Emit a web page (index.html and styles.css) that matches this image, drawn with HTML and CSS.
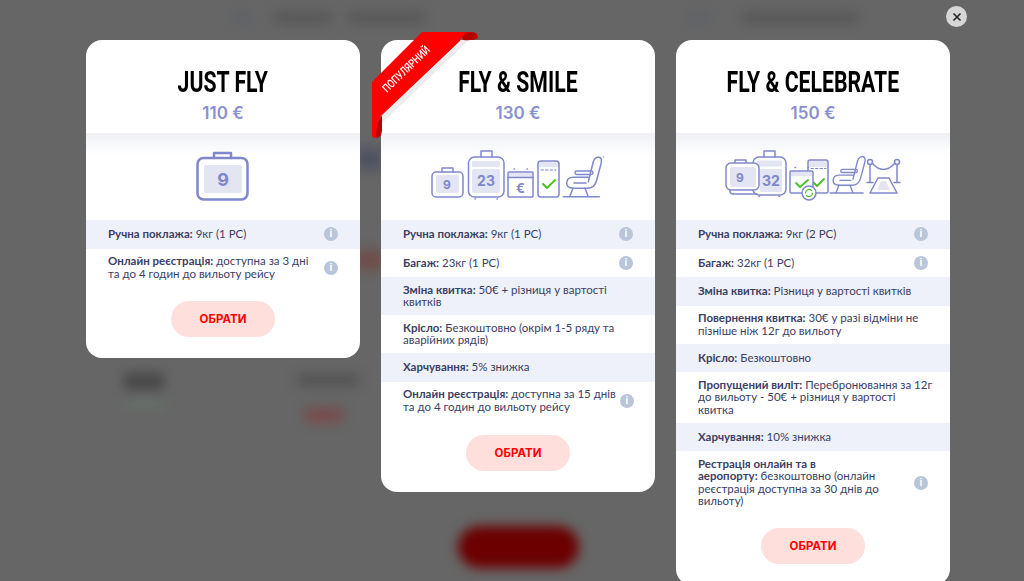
FILE: index.html
```html
<!DOCTYPE html>
<html lang="uk">
<head>
<meta charset="utf-8">
<meta name="viewport" content="width=device-width, initial-scale=1">
<title>Тарифи</title>
<link rel="stylesheet" href="styles.css">
</head>
<body>
<!-- blurred page behind the modal -->
<div class="behind">
  <span class="blot b1"></span><span class="blot b2"></span><span class="blot b3"></span>
  <span class="blot b4"></span><span class="blot b5"></span>
  <span class="blot b6"></span><span class="blot b7"></span>
  <span class="blot b8"></span><span class="blot b9"></span>
  <span class="blot b10"></span>
  <span class="blot b11"></span><span class="blot b12"></span>
</div>

<div class="modal">
  <button class="close" aria-label="Закрити">
    <svg viewBox="0 0 10 10" width="10" height="10"><path d="M1.500 1.500l7 7M8.500 1.500l-7 7" stroke="#222" stroke-width="1.600" fill="none"/></svg>
  </button>

  <div class="plans">
    <section class="plan">
      <header class="plan-head">
        <h2 class="plan-name"><span>JUST FLY</span></h2>
        <p class="plan-price">110 €</p>
      </header>
      <div class="plan-pic">
        <svg class="ico" width="54" height="52" viewBox="0 0 54 52">
          <path class="heavy" d="M18 8V3h17v5"/>
          <rect class="heavy" x="1.500" y="8" width="50" height="41.500" rx="6"/>
          <rect class="soft" x="8" y="15" width="38" height="28" rx="2"/>
          <text x="27" y="35.500" class="num" font-size="18">9</text>
        </svg>
      </div>
      <ul class="rows">
        <li class="row"><p><b>Ручна поклажа:</b> 9кг (1 PC)</p><i class="info">i</i></li>
        <li class="row"><p><b>Онлайн реєстрація:</b> доступна за 3 дні<br>та до 4 годин до вильоту рейсу</p><i class="info">i</i></li>
      </ul>
      <a class="pick" href="#">ОБРАТИ</a>
    </section>

    <section class="plan">
      <svg class="ribbon" width="110" height="110" viewBox="0 0 110 110">
        <path class="crease" d="M91 8h6L10 91v-8z"/>
        <path class="fold" d="M88 0h12q6 0 6 6-5 3-15 2z"/>
        <path class="fold" d="M0 100l10-17v16q-1 7-6 7-4 0-4-4z"/>
        <path class="band" d="M0 50L50 0h46q-5 1-8 9L10 83q-6 5-6 23-4 0-4-4z"/>
        <text transform="translate(15 61) rotate(-44) scale(.78 1)" class="ribbon-text">ПОПУЛЯРНИЙ</text>
      </svg>
      <header class="plan-head">
        <h2 class="plan-name"><span>FLY &amp; SMILE</span></h2>
        <p class="plan-price">130 €</p>
      </header>
      <div class="plan-pic">
        <svg class="ico" width="174" height="52" viewBox="0 0 174 52">
          <path d="M11 22v-4h11v4"/>
          <rect x="1" y="22" width="31" height="25" rx="4"/>
          <rect class="soft" x="5" y="25" width="23" height="18" rx="2"/>
          <text x="16" y="39" class="num" font-size="12">9</text>

          <path d="M50 7V1h11v6"/>
          <rect x="37.500" y="7" width="35.500" height="40" rx="6"/>
          <rect class="soft" x="41" y="11" width="28" height="6" rx="1"/>
          <rect class="soft" x="41" y="19" width="28" height="24" rx="2"/>
          <text x="55" y="36" class="num" font-size="14">23</text>
          <path d="M44 49h.5M66 49h.5"/>

          <path d="M83 19h.5M96 19h.5"/>
          <rect class="soft" x="78" y="23" width="23" height="4"/>
          <rect x="77" y="22" width="25" height="25" rx="1"/>
          <path d="M77 27.500h25"/>
          <text x="89.500" y="42.500" class="num" font-size="13">€</text>

          <path class="soft" d="M108 14q0-2 2-2h16q2 0 2 2v3h-20z"/>
          <rect x="107" y="11" width="21" height="36" rx="3"/>
          <path d="M110 20h15" stroke-dasharray="2.500 2" stroke-width="1"/>
          <path class="tick" d="M112 34l4 4 8-8"/>

          <path d="M157.300 31.700l5-20q1.700-5 6-4.400 3.400 1 1.400 7.700l-4 15q-1.700 8.300-10 8.300h-13.400q-6.600-.6-6.600-5 0-6 6.600-6h15"/>
          <rect x="144" y="21" width="18" height="3.500" rx="1.700"/>
          <path d="M143 33h12M142 38.300L139 46M154 38.300l3 7.700M132.300 46.700h36"/>
          <path d="M172.500 7h.2" stroke-width="1"/>
        </svg>
      </div>
      <ul class="rows">
        <li class="row"><p><b>Ручна поклажа:</b> 9кг (1 PC)</p><i class="info">i</i></li>
        <li class="row"><p><b>Багаж:</b> 23кг (1 PC)</p><i class="info">i</i></li>
        <li class="row"><p><b>Зміна квитка:</b> 50€ + різниця у вартості<br>квитків</p></li>
        <li class="row"><p><b>Крісло:</b> Безкоштовно (окрім 1-5 ряду та<br>аварійних рядів)</p></li>
        <li class="row"><p><b>Харчування:</b> 5% знижка</p></li>
        <li class="row"><p><b>Онлайн реєстрація:</b> доступна за 15 днів<br>та до 4 годин до вильоту рейсу</p><i class="info">i</i></li>
      </ul>
      <a class="pick" href="#">ОБРАТИ</a>
    </section>

    <section class="plan">
      <header class="plan-head">
        <h2 class="plan-name"><span>FLY &amp; CELEBRATE</span></h2>
        <p class="plan-price">150 €</p>
      </header>
      <div class="plan-pic">
        <svg class="ico" width="178" height="52" viewBox="0 0 178 52">
          <path d="M40 7V1h11v6"/>
          <rect x="29" y="7" width="33" height="38" rx="6"/>
          <rect class="soft" x="33" y="10.500" width="25" height="6" rx="1"/>
          <rect class="soft" x="36" y="19" width="22" height="23" rx="1"/>
          <text x="47" y="36" class="num" font-size="14">32</text>
          <path d="M35 46.500h.5M55 46.500h.5"/>

          <path d="M11 13v-3h11v3"/>
          <path d="M6 40v1q0 3 3 3h24"/>
          <rect class="wash" x="2" y="13" width="33" height="27" rx="5"/>
          <rect class="soft" x="6" y="17" width="26" height="20" rx="2"/>
          <text x="16" y="32" class="num" font-size="12">9</text>

          <rect class="wash" x="84" y="10" width="20" height="33" rx="2"/>
          <path class="soft" d="M85 11h18v6H85z"/>
          <path d="M87 18.500h15" stroke-dasharray="2.500 2" stroke-width="1"/>
          <path class="tick" d="M89 32l4 4 7-7"/>

          <path d="M71 17.500h.5M84 17.500h.5"/>
          <rect class="wash" x="66" y="21" width="23" height="22" rx="1"/>
          <rect class="soft" x="67" y="22" width="21" height="4"/>
          <path class="tick" d="M72 33l4 4 8-7"/>
          <circle class="wash" cx="85" cy="43" r="7"/>
          <path class="tick thin" d="M81.500 43a3.500 3.500 0 0 1 6-2.500M88.500 43a3.500 3.500 0 0 1-6 2.500"/>

          <g transform="translate(-15.700 0) scale(.92)">
            <path d="M157.300 31.700l5-20q1.700-5 6-4.400 3.400 1 1.400 7.700l-4 15q-1.700 8.300-10 8.300h-13.400q-6.600-.6-6.600-5 0-6 6.600-6h15"/>
            <rect x="144" y="21" width="18" height="3.500" rx="1.700"/>
            <path d="M143 33h12M142 38.300L139 46M154 38.300l3 7.700M132.300 46.700h36"/>
          </g>

          <circle cx="146" cy="12" r="2.500"/>
          <circle cx="173" cy="12" r="2.500"/>
          <path d="M146 14.500V32M173 14.500V32M143 32.500h6M170 32.500h6M148 13q11.500 13 23 0"/>
          <path class="soft" d="M157 31h5l4 9h-13z"/>
          <path d="M154 28h11l8 15h-27z"/>
        </svg>
      </div>
      <ul class="rows">
        <li class="row"><p><b>Ручна поклажа:</b> 9кг (2 PC)</p><i class="info">i</i></li>
        <li class="row"><p><b>Багаж:</b> 32кг (1 PC)</p><i class="info">i</i></li>
        <li class="row"><p><b>Зміна квитка:</b> Різниця у вартості квитків</p></li>
        <li class="row"><p><b>Повернення квитка:</b> 30€ у разі відміни не<br>пізніше ніж 12г до вильоту</p></li>
        <li class="row"><p><b>Крісло:</b> Безкоштовно</p></li>
        <li class="row"><p><b>Пропущений виліт:</b> Перебронювання за 12г<br>до вильоту - 50€ + різниця у вартості<br>квитка</p></li>
        <li class="row"><p><b>Харчування:</b> 10% знижка</p></li>
        <li class="row"><p><b>Рестрація онлайн та в<br>аеропорту:</b> безкоштовно (онлайн<br>реєстрація доступна за 30 днів до<br>вильоту)</p><i class="info">i</i></li>
      </ul>
      <a class="pick" href="#">ОБРАТИ</a>
    </section>
  </div>
</div>
</body>
</html>
```
FILE: styles.css
```css
*{box-sizing:border-box;}
html,body{margin:0;padding:0;height:100%;overflow:hidden;}
body{
  font-family:'Lato','Noto Sans',sans-serif;
  background:#666;
  color:#3a4063;
}

/* page behind the overlay, only a blur is left of it */
.behind{position:fixed;inset:0;filter:blur(6px);}
.blot{position:absolute;display:block;background:#565656;border-radius:3px;}
.b1{left:232px;top:12px;width:20px;height:12px;background:#606268;}
.b2{left:274px;top:12px;width:58px;height:11px;}
.b3{left:348px;top:12px;width:76px;height:11px;}
.b4{left:688px;top:12px;width:22px;height:12px;background:#606268;}
.b5{left:742px;top:12px;width:116px;height:11px;}
.b6{left:124px;top:373px;width:40px;height:17px;background:#484848;}
.b7{left:126px;top:400px;width:38px;height:8px;background:#66736a;}
.b8{left:298px;top:375px;width:60px;height:10px;background:#505050;}
.b9{left:304px;top:408px;width:40px;height:14px;background:#7a4a4a;border-radius:7px;}
.b10{left:458px;top:526px;width:121px;height:42px;background:#6c0000;border-radius:21px;}
.b11{left:356px;top:148px;width:26px;height:22px;background:#4f5162;}
.b12{left:356px;top:250px;width:26px;height:20px;background:#6f4c48;}

.modal{position:fixed;inset:0;}
.close{
  position:absolute;left:946px;top:6px;
  width:21px;height:21px;padding:0;border:0;border-radius:50%;
  background:#d6d6d6;
  display:flex;align-items:center;justify-content:center;
}

.plans{display:flex;align-items:flex-start;gap:21px;padding:40px 0 0 86px;}
.plan{
  position:relative;
  flex:none;width:274px;
  background:#fff;border-radius:16px;
  padding-bottom:21px;
}
.plan-head{height:93px;text-align:center;padding-top:24px;}
.plan-name{
  margin:0;
  font-family:'Roboto','Liberation Sans',sans-serif;
  font-weight:700;font-size:29.500px;line-height:36px;color:#000;
}
/* no condensed face installed, so squeeze the heading */
.plan-name span{display:inline-block;transform:scaleX(.72);white-space:nowrap;}
.plan-price{margin:1px 0 0;font-family:'Inter',sans-serif;font-weight:600;font-size:17px;line-height:24px;color:#8a91cf;}
.plan-pic{
  height:87px;
  display:flex;align-items:flex-start;justify-content:center;padding-top:17px;
  background:linear-gradient(#eef0f5,#fff 22px);
}

.ico{fill:none;stroke:#8088cc;stroke-width:1.500;stroke-linecap:round;stroke-linejoin:round;overflow:visible;}
.ico .heavy{stroke-width:2.500;}
.ico .soft{fill:#e3e5f3;stroke:none;}
.ico .wash{fill:#fff;}
.ico .tick{stroke:#45c21f;stroke-width:1.800;}
.ico .thin{stroke-width:1.200;}
.ico .num{
  fill:#8088cc;stroke:none;text-anchor:middle;
  font-family:'Inter',sans-serif;font-weight:700;
}

.ribbon{position:absolute;left:-9px;top:-8px;overflow:visible;}
.band{fill:#f00;}
.fold{fill:#b80000;}
.crease{fill:#ececef;}
.ribbon-text{
  fill:#fff;font-size:11.500px;font-weight:500;
  font-family:'Roboto',sans-serif;
}

.rows{list-style:none;margin:0;padding:0;}
.row{
  display:flex;align-items:center;gap:4px;
  min-height:28.500px;padding:6.500px 22px;
  font-size:11.500px;line-height:12.500px;
}
.row:nth-child(odd){background:#eef1f9;}
.row p{flex:1;margin:0;white-space:nowrap;}
.row b{font-weight:700;}
.info{
  flex:none;width:14px;height:14px;border-radius:50%;
  background:#b9c6d9;color:#fff;
  font:700 10px/14px 'Liberation Sans',sans-serif;text-align:center;
}

.pick{
  display:block;width:104px;height:36px;margin:14.500px auto 0;
  border-radius:18px;background:#ffdfdc;color:#f00;
  font-family:'Inter',sans-serif;font-weight:700;font-size:11.500px;line-height:36px;text-align:center;text-decoration:none;
}
.plan:nth-child(2) .pick{margin-top:15.500px;}
.plan:nth-child(3) .pick{margin-top:14px;}
```
